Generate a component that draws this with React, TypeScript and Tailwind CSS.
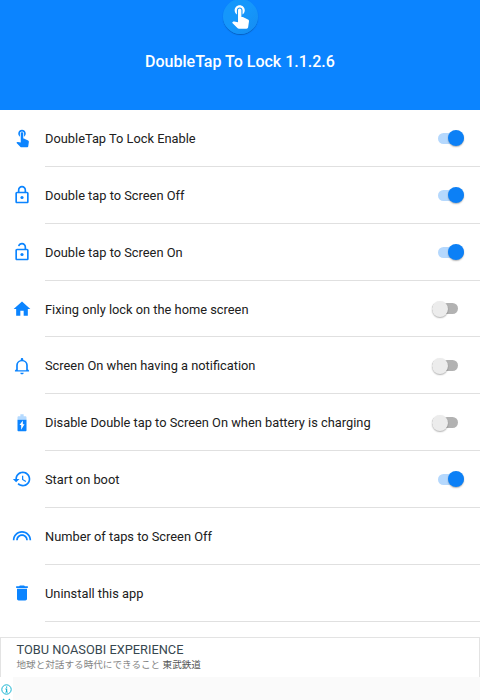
import type { ReactNode } from "react";

interface IRow {
  label: string;
  icon: ReactNode;
  on?: boolean;
}

const touchPath =
  "M9 11.24V7.5C9 6.12 10.12 5 11.5 5S14 6.12 14 7.5v3.74c1.21-.81 2-2.18 2-3.74C16 5.01 13.99 3 11.5 3S7 5.01 7 7.5c0 1.56.79 2.93 2 3.74zm9.84 4.63l-4.54-2.26c-.17-.07-.35-.11-.54-.11H13v-6c0-.83-.67-1.5-1.5-1.5S10 6.67 10 7.5v10.74l-3.43-.72c-.08-.01-.15-.03-.24-.03-.31 0-.59.13-.79.33l-.79.8 4.94 4.94c.27.27.65.44 1.06.44h6.79c.75 0 1.33-.55 1.44-1.28l.75-5.27c.01-.07.02-.14.02-.2 0-.62-.38-1.16-.91-1.38z";

const rows: IRow[] = [
  {
    label: "DoubleTap To Lock Enable",
    icon: <path d={touchPath} transform="translate(0.5 -0.8)" />,
    on: true,
  },
  {
    label: "Double tap to Screen Off",
    icon: (
      <>
        <path d="M18 8h-1V6c0-2.76-2.24-5-5-5S7 3.24 7 6v2H6c-1.1 0-2 .9-2 2v10c0 1.1.9 2 2 2h12c1.1 0 2-.9 2-2V10c0-1.1-.9-2-2-2zM9 6c0-1.66 1.34-3 3-3s3 1.34 3 3v2H9V6zm9 14H6V10h12v10z" />
        <circle cx="12" cy="15" r="1.9" />
      </>
    ),
    on: true,
  },
  {
    label: "Double tap to Screen On",
    icon: (
      <>
        <path d="M18 8h-1V6c0-2.76-2.24-5-5-5-2.28 0-4.27 1.54-4.84 3.75l1.94.49C9.44 3.93 10.63 3 12 3c1.65 0 3 1.35 3 3v2H6c-1.1 0-2 .9-2 2v10c0 1.1.9 2 2 2h12c1.1 0 2-.9 2-2V10c0-1.1-.9-2-2-2zm0 12H6V10h12v10z" />
        <circle cx="12" cy="15" r="1.9" />
      </>
    ),
    on: true,
  },
  {
    label: "Fixing only lock on the home screen",
    icon: <path d="M10 20v-6h4v6h5v-8h3L12 3 2 12h3v8z" />,
    on: false,
  },
  {
    label: "Screen On when having a notification",
    icon: (
      <path d="M12 22c1.1 0 2-.9 2-2h-4c0 1.1.9 2 2 2zm7-6v-5c0-3.07-2.13-5.64-5.5-6.32V4c0-.83-.67-1.5-1.5-1.5s-1.5.67-1.5 1.5v.68C7.14 5.36 5 7.92 5 11v5l-1.5 1.5v1.2h17v-1.2L19 16zm-2 1H7v-6c0-2.6 2-4.6 5-4.6s5 2 5 4.6v6z" />
    ),
    on: false,
  },
  {
    label: "Disable Double tap to Screen On when battery is charging",
    icon: (
      <>
        <path
          fillOpacity=".3"
          d="M17.4 5.33c0-.73-.6-1.33-1.33-1.33H14V1.5h-4V4H7.93C7.2 4 6.6 4.6 6.6 5.33V8h10.8V5.33z"
        />
        <path d="M6.6 8v12.67c0 .73.6 1.33 1.33 1.33h8.14c.73 0 1.33-.6 1.33-1.33V8H6.6zM11 20v-5.5H9L13 9v4.5h2L11 20z" />
      </>
    ),
    on: false,
  },
  {
    label: "Start on boot",
    icon: (
      <path d="M13 3c-4.97 0-9 4.03-9 9H1l3.89 3.89.07.14L9 12H6c0-3.87 3.13-7 7-7s7 3.13 7 7-3.13 7-7 7c-1.93 0-3.68-.79-4.94-2.06l-1.42 1.42C8.27 19.99 10.51 21 13 21c4.97 0 9-4.03 9-9s-4.03-9-9-9zm-1 5v5l4.28 2.54.72-1.21-3.5-2.08V8H12z" />
    ),
    on: true,
  },
  {
    label: "Number of taps to Screen Off",
    icon: (
      <path d="M12 10c-3.86 0-7 3.14-7 7h2c0-2.76 2.24-5 5-5s5 2.24 5 5h2c0-3.86-3.14-7-7-7zm0-4C5.93 6 1 10.93 1 17h2c0-4.96 4.04-9 9-9s9 4.04 9 9h2c0-6.07-4.93-11-11-11z" />
    ),
  },
  {
    label: "Uninstall this app",
    icon: (
      <path d="M6 19c0 1.1.9 2 2 2h8c1.1 0 2-.9 2-2V7H6v12zM19 4h-3.5l-1-1h-5l-1 1H5v2h14V4z" />
    ),
  },
];

const Toggle = ({ on }: { on: boolean }) => {
  return (
    <div
      className={`mt-px flex h-[11px] w-[26px] items-center rounded-full ${
        on ? "mr-4 justify-end bg-[#b5d8fd]" : "mr-[22px] justify-start bg-[#b2b2b2]"
      }`}
    >
      <span
        className={`size-4 shrink-0 rounded-full shadow-[0_1px_1.5px_rgba(0,0,0,0.3)] ${
          on ? "bg-[#0c80f6]" : "bg-[#ececec]"
        }`}
      />
    </div>
  );
};

const Row = ({ row }: { row: IRow }) => {
  return (
    <div className="flex h-[56.85px] items-center">
      <div className="flex w-[45px] pl-[12px]">
        <svg viewBox="0 0 24 24" className="size-5 fill-[#0b84ff]">
          {row.icon}
        </svg>
      </div>
      <div className="flex h-full flex-1 items-center justify-between border-b border-[#e0e0e0]">
        <p className="pt-[1.5px] text-[12.83px] text-[#202020]">{row.label}</p>
        {row.on !== undefined && <Toggle on={row.on} />}
      </div>
    </div>
  );
};

export default function App() {
  return (
    <div className="flex h-[700px] w-[480px] flex-col overflow-hidden bg-white font-['Roboto','Noto_Sans_CJK_JP',sans-serif]">
      <header className="flex h-[110px] shrink-0 flex-col items-center bg-[#0b84ff]">
        <div className="-mt-px flex size-[35px] shrink-0 items-center justify-center rounded-full bg-linear-to-br from-[#1597fb] from-50% to-[#168cf0] shadow-[0_1px_1px_rgba(0,50,110,0.45)]">
          <svg viewBox="0 0 24 24" className="size-[27px] fill-white">
            <path d={touchPath} transform="translate(-0.2 -1.1)" />
          </svg>
        </div>
        <h1 className="mt-[16px] text-base font-medium text-white">
          DoubleTap To Lock 1.1.2.6
        </h1>
      </header>

      <main className="shrink-0">
        {rows.map((row) => (
          <Row key={row.label} row={row} />
        ))}
      </main>

      <div className="mt-[15px] h-[40px] shrink-0 border-x border-t border-[#e3e3e3] pl-[15.5px] pt-[4px]">
        <p className="text-[12.8px] leading-4 text-[#37474f]">
          TOBU NOASOBI EXPERIENCE
        </p>
        <p className="text-[9.6px] leading-[14px] text-[#858585]">
          地球と対話する時代にできること <span className="text-[#555]">東武鉄道</span>
        </p>
      </div>
      <footer className="flex-1 bg-[#fafafa]">
        <div className="flex h-full w-[13px] flex-col items-center bg-white pt-[7px]">
          <svg viewBox="0 0 11 11" className="size-[11px] shrink-0">
            <circle cx="5.5" cy="5.5" r="4.7" fill="none" stroke="#16b3d1" />
            <path d="M5 2.5h1.2v1.2H5zM4.3 4.6h1.9v3.2h.7v.8H4.2v-.8H5V5.4h-.7z" fill="#16b3d1" />
          </svg>
          <svg viewBox="0 0 9 9" className="mt-[3px] size-[9px] shrink-0">
            <path d="M1 1l7 7M8 1L1 8" stroke="#16b3d1" strokeWidth="1.3" />
          </svg>
        </div>
      </footer>
    </div>
  );
}
